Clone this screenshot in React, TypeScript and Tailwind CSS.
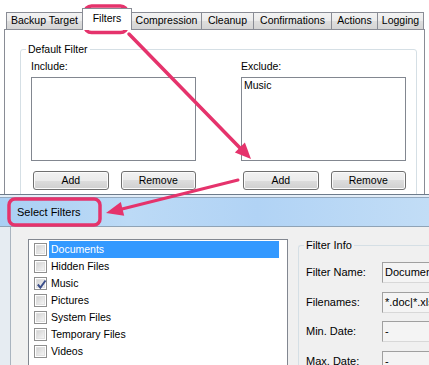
import React from "react"

const tabs = [
  { label: "Backup Target", w: "w-[77px]" },
  { label: "Filters", w: "w-[50px]", active: true },
  { label: "Compression", w: "w-[71px]" },
  { label: "Cleanup", w: "w-[53px]" },
  { label: "Confirmations", w: "w-[79px]" },
  { label: "Actions", w: "w-[47px]" },
  { label: "Logging", w: "w-[47px]" },
]

const filters = [
  { name: "Documents", selected: true },
  { name: "Hidden Files" },
  { name: "Music", checked: true },
  { name: "Pictures" },
  { name: "System Files" },
  { name: "Temporary Files" },
  { name: "Videos" },
]

const info = [
  { label: "Filter Name:", value: "Documents" },
  { label: "Filenames:", value: "*.doc|*.xls|*.ppt" },
  { label: "Min. Date:", value: "-" },
  { label: "Max. Date:", value: "-" },
]

function WinButton({ children }: { children: React.ReactNode }) {
  return (
    <div className="h-[19px] flex-1 flex items-center justify-center rounded-[3px] border border-[#707070] bg-[linear-gradient(#f2f2f2,#ebebeb_50%,#dddddd_50%,#cfcfcf)] shadow-[inset_0_0_0_1px_#fbfbfb]">
      {children}
    </div>
  )
}

function FilterColumn({ label, items }: { label: string; items: string[] }) {
  return (
    <div className="w-[165px] flex flex-col">
      <div className="h-[12px] leading-[12px]">{label}</div>
      <div className="mt-[5px] h-[84px] border border-[#828790] bg-white px-[2px] pt-[1px] leading-[13px]">
        {items.map((it) => (
          <div key={it}>{it}</div>
        ))}
      </div>
      <div className="mt-[10px] pl-[2px] flex gap-[12px]">
        <WinButton>Add</WinButton>
        <WinButton>Remove</WinButton>
      </div>
    </div>
  )
}

function CheckBox({ checked }: { checked?: boolean }) {
  return (
    <div className="w-[13px] h-[13px] border border-[#8f8f8f] bg-white p-px shrink-0">
      <div className="w-full h-full bg-[linear-gradient(135deg,#d4d4d4,#f4f4f4)] border border-[#e0e0e0] relative">
        {checked && (
          <svg viewBox="0 0 9 9" className="absolute -inset-px w-[11px] h-[11px]">
            <path d="M1.5 4.5 L3.6 7 L7.8 1.2" fill="none" stroke="#3c4f8a" strokeWidth="1.6" />
          </svg>
        )}
      </div>
    </div>
  )
}

export default function App() {
  const pink = "#e5336c"
  return (
    <div className="relative w-[429px] h-[365px] overflow-hidden bg-white text-black font-['Liberation_Sans',Arial,sans-serif]">
      {/* main window */}
      <div className="h-[194px] overflow-hidden pt-[8px] pl-[4px] text-[10.5px]">
        <div className="flex items-end h-[21px] pl-[2px]">
          {tabs.map((t, i) =>
            t.active ? (
              <div
                key={t.label}
                className={`${t.w} -ml-px h-[22px] -mb-px relative z-10 bg-white border border-b-0 border-[#898c95] flex items-center justify-center pb-[2px]`}
              >
                {t.label}
              </div>
            ) : (
              <div
                key={t.label}
                className={`${t.w} ${i === 0 ? "" : "-ml-px"} h-[17px] border border-b-0 border-[#898c95] bg-[linear-gradient(#f3f3f3,#ebebeb_50%,#dedede_50%,#d4d4d4)] flex items-center justify-center`}
              >
                {t.label}
              </div>
            )
          )}
        </div>
        <div className="w-[421px] h-[200px] border border-[#898c95] bg-white pt-[19px] pl-[15px]">
          <div className="relative w-[397px] h-[190px] rounded-[3px] border border-[#d5dfe5] pt-[10px] pl-[10px]">
            <div className="absolute -top-[7px] left-[5px] bg-white px-[2px] leading-[12px]">Default Filter</div>
            <div className="flex gap-[45px]">
              <FilterColumn label="Include:" items={[]} />
              <FilterColumn label="Exclude:" items={["Music"]} />
            </div>
          </div>
        </div>
      </div>

      {/* dialog */}
      <div className="border-t border-[#6d7b8b] bg-[#e4eef8]">
        <div className="mt-[2px] border-t border-[#93a9c0] h-[29px] bg-[linear-gradient(90deg,#a9cff4,#bcdaf6_30%,#b1d3f5_60%,#c2ddf6)] flex items-center pl-[17px] text-[11px]">
          Select Filters
        </div>
        <div className="flex border-t border-[#8fa3b6] h-[150px]">
          <div className="w-[11px] shrink-0 bg-[#e6ecf2] border-r border-[#aab4bf]" />
          <div className="flex-1 min-w-0 bg-[#f0f0f0] pt-[12px] pl-[17px] flex text-[10.5px]">
            <div className="w-[260px] shrink-0 h-[140px] border border-[#828790] bg-white pt-[1px] pl-[5px]">
              {filters.map((f) => (
                <div key={f.name} className="h-[17px] flex items-center">
                  <CheckBox checked={f.checked} />
                  <div
                    className={`ml-[2px] w-[230px] h-[17px] pl-[2px] flex items-center ${
                      f.selected ? "bg-[#3399ff] text-white" : ""
                    }`}
                  >
                    {f.name}
                  </div>
                </div>
              ))}
            </div>
            <div className="ml-[10px] mt-[6px] relative w-[200px] shrink-0 h-[150px] border border-r-0 border-[#d5dfe5] rounded-l-[3px] pt-[16px] pl-[7px] text-[11px]">
              <div className="absolute -top-[7px] left-[5px] bg-[#f0f0f0] px-[2px] leading-[13px]">Filter Info</div>
              <div className="flex flex-col gap-[8.5px]">
                {info.map((r) => (
                  <div key={r.label} className="flex items-center h-[21px]">
                    <div className="w-[76px] shrink-0">{r.label}</div>
                    <div className="h-[21px] w-[110px] shrink-0 border border-[#a0a0a0] border-b-[#d8d8d8] border-r-[#d8d8d8] bg-[#f4f4f4] pl-[2px] flex items-center overflow-hidden whitespace-nowrap">
                      {r.value}
                    </div>
                  </div>
                ))}
              </div>
            </div>
          </div>
        </div>
      </div>

      {/* annotations */}
      <svg className="absolute inset-0 pointer-events-none" width="429" height="365" viewBox="0 0 429 365">
        <rect x="84.5" y="6" width="43" height="26.5" rx="7" fill="none" stroke={pink} strokeWidth="3.5" />
        <rect x="9" y="199" width="91" height="26" rx="6" fill="none" stroke={pink} strokeWidth="3.5" />
        <line x1="129" y1="34" x2="241" y2="149" stroke={pink} strokeWidth="3.5" strokeLinecap="round" />
        <polygon points="234.9,152.4 244.9,142.6 251,159" fill={pink} />
        <line x1="238" y1="180" x2="120" y2="209.5" stroke={pink} strokeWidth="3" strokeLinecap="round" />
        <polygon points="106,213 120.8,202.1 124.2,215.7" fill={pink} />
      </svg>
    </div>
  )
}
